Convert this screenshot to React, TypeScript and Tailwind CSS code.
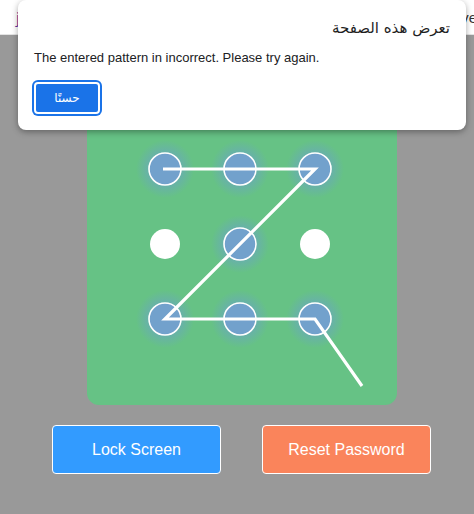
import React from 'react'

const cols = [78, 153, 228]
const rows = [74, 149, 224]

// which dots are part of the drawn pattern (row, col)
const selected = ['0-0', '0-1', '0-2', '1-1', '2-0', '2-1', '2-2']

const PatternPad = () => {
  return (
    <svg width="310" height="310" viewBox="0 0 310 310" className="block">
      <defs>
        <radialGradient id="glow">
          <stop offset="0%" stopColor="#5b8fd6" stopOpacity="0.85" />
          <stop offset="55%" stopColor="#6a9fd0" stopOpacity="0.5" />
          <stop offset="100%" stopColor="#6a9fd0" stopOpacity="0" />
        </radialGradient>
      </defs>
      {rows.map((y, r) =>
        cols.map((x, c) => {
          const on = selected.includes(`${r}-${c}`)
          return on ? (
            <g key={`${r}-${c}`}>
              <circle cx={x} cy={y} r="29" fill="url(#glow)" />
              <circle cx={x} cy={y} r="16" fill="#72a1cc" stroke="#ffffff" strokeWidth="1.6" />
            </g>
          ) : (
            <circle key={`${r}-${c}`} cx={x} cy={y} r="15" fill="#ffffff" />
          )
        })
      )}
      <polyline
        points="76,74 228,74 78,224 228,224 275,291"
        fill="none"
        stroke="#ffffff"
        strokeWidth="3.2"
        strokeLinejoin="miter"
      />
    </svg>
  )
}

const App = () => {
  return (
    <div className="relative w-[474px] h-[514px] overflow-hidden bg-[#999999] font-['Liberation_Sans',Arial,sans-serif]">
      <div className="h-[35px] bg-white flex items-center justify-between pl-[16px] pr-0 border-b border-[#e3e3e3] text-[15px] font-['Noto_Sans',sans-serif]">
        <span className="text-[#6b2fa0]">j</span>
        <span className="text-[#333] translate-x-[3px]">ve</span>
      </div>

      <div className="flex flex-col pl-[87px] pt-[60px]">
        <div className="w-[310px] h-[310px] rounded-[12px] bg-[#66c285]">
          <PatternPad />
        </div>
      </div>

      <div className="flex gap-[41px] pl-[52px] pt-[20px]">
        <button className="w-[169px] h-[49px] rounded-[4px] border border-white bg-[#329bff] text-white text-[16px]">
          Lock Screen
        </button>
        <button className="w-[169px] h-[49px] rounded-[4px] border border-white bg-[#fa845b] text-white text-[16px]">
          Reset Password
        </button>
      </div>

      <div className="absolute left-[18px] top-0 w-[448px] h-[130px] rounded-lg bg-white shadow-[0_2px_6px_rgba(0,0,0,0.35)] px-4 pt-[14px]">
        <div dir="rtl" className="text-[15px] leading-[28px] text-[#1f1f1f] font-['DejaVu_Sans',sans-serif]">
          تعرض هذه الصفحة
        </div>
        <p className="mt-[7px] text-[13px] leading-[18px] text-[#202124]">
          The entered pattern in incorrect. Please try again.
        </p>
        <button className="mt-[15px] w-[66px] h-[32px] rounded-[4px] bg-[#1a73e8] ring-2 ring-[#1a73e8] border-2 border-white text-white text-[12px] font-['DejaVu_Sans',sans-serif]">
          حسنًا
        </button>
      </div>
    </div>
  )
}

export default App
